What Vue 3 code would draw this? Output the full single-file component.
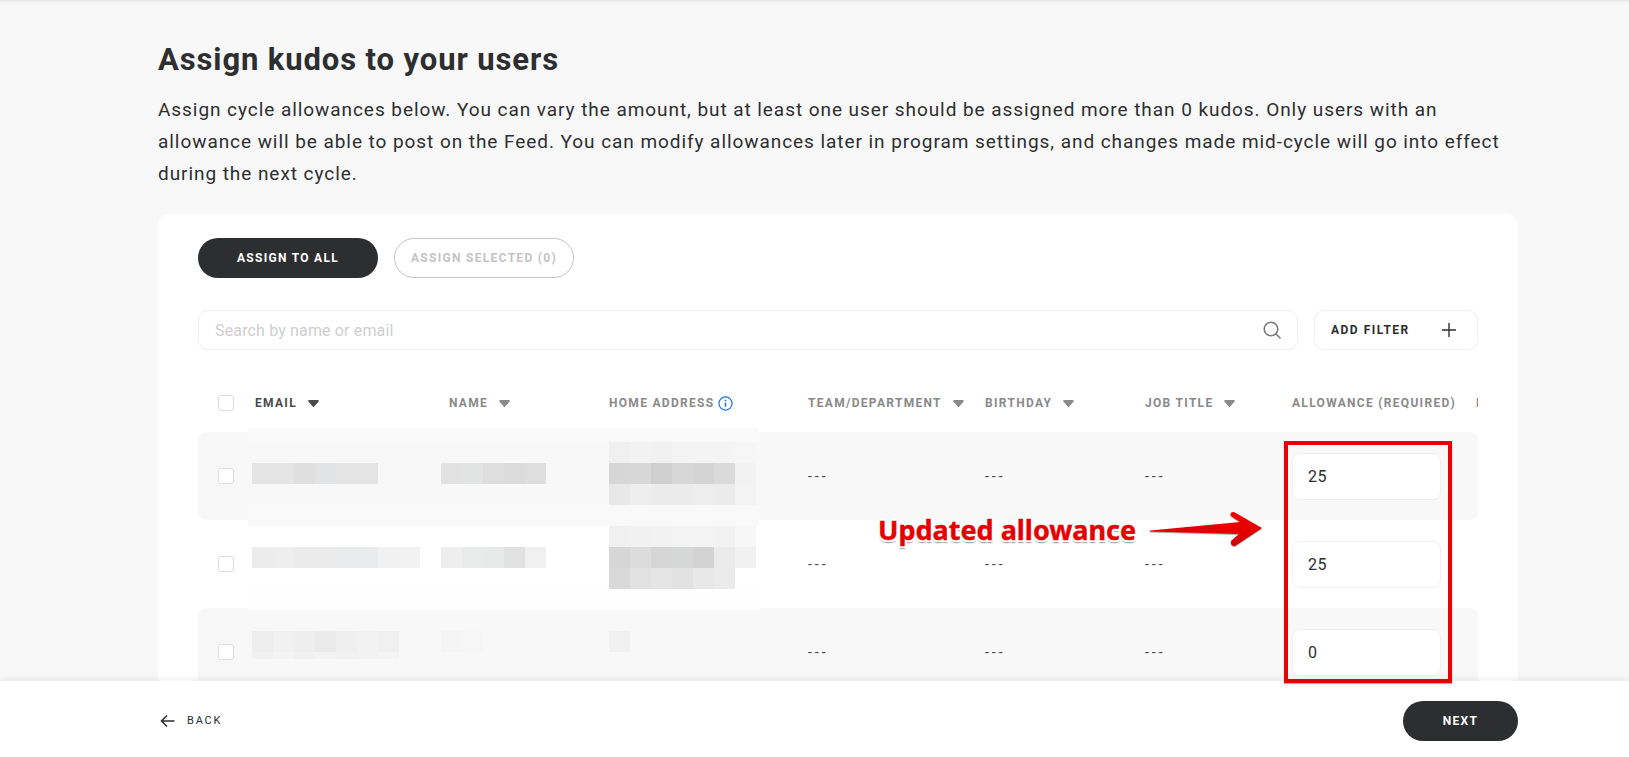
<script setup>
const columns = [
  { label: 'EMAIL', caret: true, active: true },
  { label: 'NAME', caret: true },
  { label: 'HOME ADDRESS', info: true },
  { label: 'TEAM/DEPARTMENT', caret: true },
  { label: 'BIRTHDAY', caret: true },
  { label: 'JOB TITLE', caret: true },
  { label: 'ALLOWANCE (REQUIRED)' },
  { label: 'I' }
]
const rows = [
  { id: 1, allowance: 25, shaded: true },
  { id: 2, allowance: 25, shaded: false },
  { id: 3, allowance: 0, shaded: true }
]
function strip(x, y, colours) {
  return colours.map((c, i) => ({ x: x + i * 21, y, c }))
}
const tiles = [
  ...strip(252, 463, ['#e4e4e4', '#e4e4e4', '#dfdfdf', '#e2e3e4', '#e4e4e4', '#e4e4e4']),
  ...strip(441, 463, ['#e2e2e2', '#e2e3e3', '#dedede', '#dbdbdb', '#dedede']),
  ...strip(609, 442, ['#f0f0f0', '#f2f2f2', '#f1f1f1', '#f3f3f3', '#f4f4f4', '#f4f4f4', '#f6f6f6']),
  ...strip(609, 463, ['#d6d6d6', '#d7d7d7', '#cfcfcf', '#d7d7d7', '#d4d4d4', '#dadada', '#f2f2f2']),
  ...strip(609, 484, ['#e8e8e8', '#eeeeee', '#ebebeb', '#ebebeb', '#ededed', '#ebebeb', '#f3f3f3']),
  ...strip(252, 547, ['#ececec', '#eeeeee', '#ebebeb', '#ebebeb', '#eaebec', '#eaebec', '#f1f1f1', '#f2f2f2']),
  ...strip(441, 547, ['#eeeeee', '#e9ebea', '#e8eaea', '#e1e1e1', '#f0f0f0']),
  ...strip(609, 526, ['#f0f0f0', '#f1f1f1', '#f2f2f2', '#f4f4f4', '#f4f4f4', '#f2f2f2', '#f7f7f7']),
  ...strip(609, 547, ['#d6d6d6', '#dcdcdc', '#d5d5d5', '#d6d8d8', '#d3d3d3', '#ebebeb', '#f1f1f1']),
  ...strip(609, 568, ['#d9d9d9', '#e1e1e1', '#e5e5e5', '#e2e2e2', '#e8e8e8', '#eaeaea']),
  ...strip(252, 631, ['#eeeeee', '#f0f1f0', '#eeeeee', '#eaeaea', '#efefef', '#f1f2f1', '#f0f0f0']),
  ...strip(252, 652, ['#f1f1f1', '#f3f4f3', '#f1f1f1', '#f3f3f3', '#f1f1f1', '#f1f2f1', '#f3f4f3']),
  ...strip(441, 631, ['#f5f5f5', '#f6f6f6']),
  ...strip(609, 631, ['#f1f1f1'])
]
const washes = [
  { x: 248, y: 428, w: 511, h: 14, c: '#f9f9f9' },
  { x: 248, y: 505, w: 511, h: 21, c: '#f9f9f9' },
  { x: 248, y: 589, w: 511, h: 21, c: '#fefefe' }
]
</script>

<template>
  <div class="page">
    <main class="content">
      <h1 class="title">Assign kudos to your users</h1>
      <p class="intro">Assign cycle allowances below. You can vary the amount, but at least one user should be assigned more than 0 kudos. Only users with an allowance will be able to post on the Feed. You can modify allowances later in program settings, and changes made mid-cycle will go into effect during the next cycle.</p>
      <section class="card">
        <div class="actions">
          <button class="pill pill-dark">ASSIGN TO ALL</button>
          <button class="pill pill-outline">ASSIGN SELECTED (0)</button>
        </div>
        <div class="tools">
          <div class="search">
            <span class="placeholder">Search by name or email</span>
            <svg width="18" height="18" viewBox="0 0 18 18" fill="none" stroke="#7a7a7a" stroke-width="1.6">
              <circle cx="8" cy="8" r="6.8" />
              <path d="M13 13l4 4" stroke-linecap="round" />
            </svg>
          </div>
          <div class="filter">
            <span>ADD FILTER</span>
            <svg width="14" height="14" viewBox="0 0 14 14" stroke="#2d2e30" stroke-width="1.4">
              <path d="M7 0v14M0 7h14" />
            </svg>
          </div>
        </div>
        <div class="table">
          <div class="grid head">
            <span class="check"></span>
            <span v-for="col in columns" :key="col.label" class="th" :class="{ active: col.active }">
              {{ col.label }}
              <svg v-if="col.caret" class="caret" width="11" height="7" viewBox="0 0 12 7" preserveAspectRatio="none"><path d="M1.200 0h9.600a1 1 0 0 1 .8 1.600L6.600 6.700a.8.8 0 0 1-1.200 0L.4 1.600A1 1 0 0 1 1.200 0z" /></svg>
              <svg v-if="col.info" class="info" width="15" height="15" viewBox="0 0 15 15" fill="none" stroke="#1a73d9" stroke-width="1.2">
                <circle cx="7.500" cy="7.500" r="6.600" />
                <path d="M7.500 6.600v4.200" stroke-width="1.500" />
                <circle cx="7.500" cy="4.400" r=".9" fill="#1a73d9" stroke="none" />
              </svg>
            </span>
          </div>
          <div v-for="row in rows" :key="row.id" class="grid row" :class="{ shaded: row.shaded }">
            <span class="check"></span>
            <span></span>
            <span></span>
            <span></span>
            <span class="dash">---</span>
            <span class="dash">---</span>
            <span class="dash">---</span>
            <div class="allow"><span class="amount">{{ row.allowance }}</span></div>
          </div>
        </div>
      </section>
    </main>

    <div class="mosaic">
      <i v-for="(w, i) in washes" :key="'w' + i" :style="{ left: w.x + 'px', top: w.y + 'px', width: w.w + 'px', height: w.h + 'px', background: w.c }"></i>
      <i v-for="(t, i) in tiles" :key="i" :style="{ left: t.x + 'px', top: t.y + 'px', width: '21px', height: (t.y === 652 ? 7 : 21) + 'px', background: t.c }"></i>
    </div>

    <footer class="footer">
      <div class="back">
        <svg width="15" height="14" viewBox="0 0 15 14" fill="none" stroke="#2d2e30" stroke-width="1.6">
          <path d="M14.500 7H1.500M7 1.500 1.500 7 7 12.500" />
        </svg>
        <span>BACK</span>
      </div>
      <button class="pill pill-dark next">NEXT</button>
    </footer>

    <div class="redbox"></div>
    <div class="note">Updated allowance</div>
    <svg class="arrow" width="116" height="40" viewBox="0 0 116 40">
      <defs>
        <linearGradient id="arrowFill" x1="0" y1="0" x2="0" y2="1">
          <stop offset="0" stop-color="#f20000" />
          <stop offset="1" stop-color="#d40000" />
        </linearGradient>
      </defs>
      <path d="M0 20.500 90 12 81 6Q79 2 84 2L112 18 85 36Q80 36 81 31L89 24 0 21.500Z" fill="url(#arrowFill)" />
    </svg>
  </div>
</template>

<style>
html, body { margin: 0; padding: 0; background: #f8f8f8; }
</style>

<style scoped>
.page {
  position: relative;
  width: 1629px;
  height: 757px;
  overflow: hidden;
  background: #f8f8f8;
  color: #2d2e30;
  font-family: "Roboto", "Liberation Sans", sans-serif;
  box-shadow: inset 0 3px 3px -2px #e0e0e0;
}
.content { padding: 40px 111px 0 158px; }
.title {
  margin: 0;
  font-size: 31px;
  line-height: 40px;
  font-weight: 700;
  letter-spacing: 0.88px;
}
.intro {
  margin: 14px 0 0;
  width: 1350px;
  font-size: 19px;
  line-height: 32px;
  letter-spacing: 0.94px;
}
.card {
  margin-top: 24px;
  height: 600px;
  background: #fff;
  border-radius: 12px;
  padding: 24px 40px 0;
  box-sizing: border-box;
}
.actions { display: flex; gap: 16px; }
.pill {
  width: 180px;
  height: 40px;
  border-radius: 20px;
  font-family: inherit;
  font-size: 12px;
  font-weight: 700;
  letter-spacing: 1.3px;
  box-sizing: border-box;
  padding: 0;
}
.pill-dark { background: #2d2e30; color: #fff; border: 0; }
.pill-outline { background: #fff; color: #c4c4c4; border: 1px solid #c4c4c4; }
.tools { display: flex; gap: 16px; margin-top: 32px; }
.search {
  flex: 1;
  height: 40px;
  border: 1px solid #eeeeee;
  border-radius: 10px;
  box-sizing: border-box;
  padding: 0 16px;
  display: flex;
  align-items: center;
  justify-content: space-between;
}
.placeholder { color: #cfcfcf; font-size: 16px; letter-spacing: 0.15px; }
.filter {
  width: 164px;
  height: 40px;
  border: 1px solid #eeeeee;
  border-radius: 10px;
  box-sizing: border-box;
  padding: 0 21px 0 16px;
  display: flex;
  align-items: center;
  justify-content: space-between;
  font-size: 12px;
  font-weight: 700;
  letter-spacing: 1.5px;
}
.table { width: 1280px; overflow: hidden; margin-top: 24px; }
.grid {
  display: grid;
  grid-template-columns: 57px 194px 160px 199px 177px 160px 147px 184px 2px;
  align-items: center;
}
.head { height: 58px; }
.th {
  font-size: 12px;
  font-weight: 700;
  letter-spacing: 1.3px;
  color: #8a8a8a;
  white-space: nowrap;
  display: flex;
  align-items: center;
}
.th.active { color: #4a4a4c; }
.caret { fill: #8a8a8a; margin-left: 11px; }
.th.active .caret { fill: #4a4a4c; }
.info { margin-left: 4px; }
.check {
  width: 16px;
  height: 16px;
  margin-left: 20px;
  box-sizing: border-box;
  border: 1px solid #dcdce4;
  border-radius: 3px;
  background: #fff;
}
.row { height: 88px; border-radius: 8px; }
.row.shaded { background: #f8f8f8; }
.dash { font-size: 14px; color: #444; letter-spacing: 3px; }
.allow {
  width: 149px;
  height: 47px;
  background: #fff;
  border: 1px solid #f0f0f0;
  border-radius: 8px;
  box-sizing: border-box;
  padding-left: 15px;
  display: flex;
  align-items: center;
}
.amount { font-size: 16px; letter-spacing: 0.6px; }
.mosaic { position: absolute; inset: 0; pointer-events: none; }
.mosaic i { position: absolute; display: block; }
.footer {
  position: absolute;
  left: 0;
  right: 0;
  top: 681px;
  height: 76px;
  background: #fff;
  box-shadow: 0 -3px 6px rgba(0, 0, 0, 0.06);
  padding: 3px 111px 0 160px;
  box-sizing: border-box;
  display: flex;
  align-items: center;
  justify-content: space-between;
}
.back {
  display: flex;
  align-items: center;
  gap: 12px;
  font-size: 11px;
  letter-spacing: 1.8px;
}
.next { width: 115px; }
.redbox {
  position: absolute;
  left: 1284px;
  top: 441px;
  width: 168px;
  height: 242px;
  box-sizing: border-box;
  border: 4px solid #e60000;
  box-shadow: 0 1px 1px rgba(0, 0, 0, 0.3);
}
.note {
  position: absolute;
  left: 878px;
  top: 511px;
  color: #e60000;
  font-family: "Noto Sans", sans-serif;
  font-weight: 700;
  font-size: 27px;
  line-height: 38px;
  white-space: nowrap;
  -webkit-text-stroke: 0.4px #e60000;
  text-shadow: 2px 0 0 #fff, -2px 0 0 #fff, 0 2px 0 #fff, 0 -2px 0 #fff, 1.5px 1.5px 0 #fff, -1.5px -1.5px 0 #fff, 1.5px -1.5px 0 #fff, -1.5px 1.5px 0 #fff, 0 3px 1px #aaa, 1px 3px 1px #bbb, -1px 3px 1px #bbb;
}
.arrow {
  position: absolute;
  left: 1150px;
  top: 510px;
  filter: drop-shadow(0 1px 0.5px rgba(0, 0, 0, 0.35));
}
</style>
